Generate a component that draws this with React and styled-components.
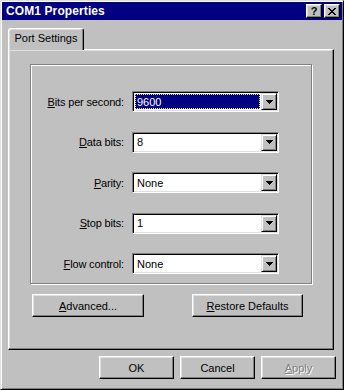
import React from 'react';
import styled, { createGlobalStyle, css } from 'styled-components';

const GlobalStyle = createGlobalStyle`
  html, body {
    margin: 0;
    padding: 0;
    background: #c0c0c0;
  }
  body {
    font-family: "Liberation Sans", Arial, sans-serif;
    font-size: 11px;
    color: #000;
  }
`;

const raised = css`
  border: 1px solid;
  border-color: #fff #000 #000 #fff;
  box-shadow: inset -1px -1px #808080, inset 1px 1px #dfdfdf;
`;

const Window = styled.div`
  box-sizing: border-box;
  width: 344px;
  height: 390px;
  padding: 1px;
  background: #c0c0c0;
  border: 1px solid;
  border-color: #dfdfdf #000 #000 #dfdfdf;
  box-shadow: inset 1px 1px #fff, inset -1px -1px #808080;
  display: flex;
  flex-direction: column;
`;

const TitleBar = styled.div`
  height: 18px;
  flex: none;
  background: #000080;
  display: flex;
  align-items: center;
  padding: 0 2px 0 4px;
`;

const Title = styled.div`
  flex: 1;
  color: #fff;
  font-weight: bold;
  font-size: 12px;
  letter-spacing: 0.1px;
`;

const CaptionButtons = styled.div`
  display: flex;
  gap: 2px;
`;

const CaptionButton = styled.div`
  ${raised};
  box-sizing: border-box;
  width: 16px;
  height: 14px;
  background: #c0c0c0;
  display: flex;
  align-items: center;
  justify-content: center;
  font-weight: bold;
  font-size: 11px;
  line-height: 1;
  padding-top: 1px;
`;

const Client = styled.div`
  flex: 1;
  display: flex;
  flex-direction: column;
  padding: 8px 6px 7px 6px;
`;

const TabStrip = styled.div`
  display: flex;
  height: 21px;
`;

const Tab = styled.div`
  position: relative;
  z-index: 1;
  box-sizing: border-box;
  width: 76px;
  height: 22px;
  margin-bottom: -1px;
  background: #c0c0c0;
  border: 1px solid;
  border-bottom: none;
  border-color: #fff #000 transparent #fff;
  border-radius: 3px 3px 0 0;
  box-shadow: inset -1px 0 #808080, inset 1px 1px #dfdfdf;
  display: flex;
  justify-content: center;
  padding-top: 3px;
`;

const Panel = styled.div`
  ${raised};
  box-sizing: border-box;
  width: 326px;
  height: 301px;
  padding: 14px 0 0 21px;
  display: flex;
  flex-direction: column;
`;

const GroupBox = styled.div`
  box-sizing: border-box;
  width: 282px;
  height: 220px;
  border: 1px solid #808080;
  box-shadow: inset 1px 1px #fff, 1px 1px #fff;
  padding: 26px 0 9px 0;
  display: grid;
  grid-template-columns: 93px 147px;
  column-gap: 8px;
  row-gap: 19.5px;
  grid-auto-rows: 21px;
  align-items: center;
`;

const Label = styled.div`
  text-align: right;
  white-space: nowrap;
  letter-spacing: -0.15px;
`;

const Combo = styled.div`
  box-sizing: border-box;
  height: 21px;
  background: #fff;
  border: 1px solid;
  border-color: #808080 #fff #fff #808080;
  box-shadow: inset 1px 1px #000, inset -1px -1px #dfdfdf;
  padding: 1px;
  display: flex;
`;

const ComboValue = styled.div`
  flex: 1;
  padding: 1px;
  display: flex;
`;

const ValueText = styled.div`
  flex: 1;
  display: flex;
  align-items: center;
  box-sizing: border-box;
  padding-left: 1px;
  border: 1px solid transparent;
  ${(p) =>
    p.$selected &&
    css`
      background: #000080;
      color: #fff;
      border: 1px dotted #f4f0a0;
    `}
`;

const DropButton = styled.div`
  box-sizing: border-box;
  width: 16px;
  height: 17px;
  background: #c0c0c0;
  border: 1px solid;
  border-color: #dfdfdf #000 #000 #dfdfdf;
  box-shadow: inset 1px 1px #fff, inset -1px -1px #808080;
  display: flex;
  align-items: center;
  justify-content: center;
`;

const PanelButtons = styled.div`
  display: flex;
  gap: 48px;
  margin: 10px 0 0 2px;
`;

const Button = styled.div`
  ${raised};
  box-sizing: border-box;
  width: ${(p) => p.$width || 75}px;
  height: 23px;
  background: #c0c0c0;
  display: flex;
  align-items: center;
  justify-content: center;
  ${(p) =>
    p.$disabled &&
    css`
      color: #808080;
      text-shadow: 1px 1px #fff;
    `}
`;

const Footer = styled.div`
  display: flex;
  justify-content: flex-end;
  gap: 6px;
  margin-top: 6px;
`;

const Arrow = () => (
  <svg width="7" height="4" viewBox="0 0 7 4" shapeRendering="crispEdges">
    <path d="M0 0h7v1H0z M1 1h5v1H1z M2 2h3v1H2z M3 3h1v1H3z" fill="#000" />
  </svg>
);

const CloseGlyph = () => (
  <svg width="8" height="7" viewBox="0 0 8 7" shapeRendering="crispEdges">
    <path
      d="M0 0h2v1H0z M6 0h2v1H6z M1 1h2v1H1z M5 1h2v1H5z M2 2h4v1H2z M3 3h2v1H3z M2 4h4v1H2z M1 5h2v1H1z M5 5h2v1H5z M0 6h2v1H0z M6 6h2v1H6z"
      fill="#000"
    />
  </svg>
);

const fields = [
  { key: 'B', rest: 'its per second:', value: '9600', selected: true },
  { key: 'D', rest: 'ata bits:', value: '8' },
  { key: 'P', rest: 'arity:', value: 'None' },
  { key: 'S', rest: 'top bits:', value: '1' },
  { key: 'F', rest: 'low control:', value: 'None' },
];

const App = () => {
  return (
    <>
      <GlobalStyle />
      <Window>
        <TitleBar>
          <Title>COM1 Properties</Title>
          <CaptionButtons>
            <CaptionButton>?</CaptionButton>
            <CaptionButton>
              <CloseGlyph />
            </CaptionButton>
          </CaptionButtons>
        </TitleBar>
        <Client>
          <TabStrip>
            <Tab>Port Settings</Tab>
          </TabStrip>
          <Panel>
            <GroupBox>
              {fields.map((f) => (
                <React.Fragment key={f.rest}>
                  <Label>
                    <u>{f.key}</u>
                    {f.rest}
                  </Label>
                  <Combo>
                    <ComboValue>
                      <ValueText $selected={f.selected}>{f.value}</ValueText>
                    </ComboValue>
                    <DropButton>
                      <Arrow />
                    </DropButton>
                  </Combo>
                </React.Fragment>
              ))}
            </GroupBox>
            <PanelButtons>
              <Button $width={112}>
                <span>
                  <u>A</u>dvanced...
                </span>
              </Button>
              <Button $width={111}>
                <span>
                  <u>R</u>estore Defaults
                </span>
              </Button>
            </PanelButtons>
          </Panel>
          <Footer>
            <Button>OK</Button>
            <Button>Cancel</Button>
            <Button $disabled>
              <span>
                <u>A</u>pply
              </span>
            </Button>
          </Footer>
        </Client>
      </Window>
    </>
  );
};

export default App;
